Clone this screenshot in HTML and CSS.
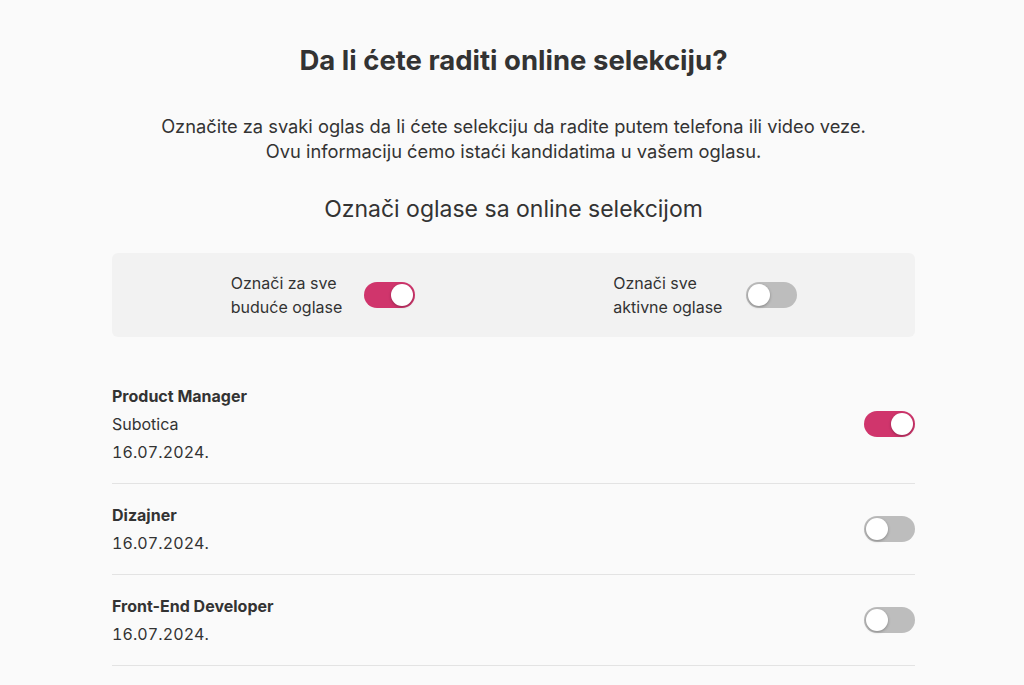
FILE: index.html
```html
<!DOCTYPE html>
<html lang="sr">
<head>
<meta charset="utf-8"/>
<title>Online selekcija</title>
<link rel="stylesheet" href="styles.css">
</head>
<body>
<div class="page">
  <h1 class="title">Da li ćete raditi online selekciju?</h1>
  <p class="intro">Označite za svaki oglas da li ćete selekciju da radite putem telefona ili video veze.<br>Ovu informaciju ćemo istaći kandidatima u vašem oglasu.</p>
  <h2 class="subtitle">Označi oglase sa online selekcijom</h2>

  <div class="bulk">
    <div class="bulk-item">
      <span class="bulk-label">Označi za sve<br>buduće oglase</span>
      <label class="switch"><input type="checkbox" checked><span class="slider"></span></label>
    </div>
    <div class="bulk-item">
      <span class="bulk-label">Označi sve<br>aktivne oglase</span>
      <label class="switch"><input type="checkbox"><span class="slider"></span></label>
    </div>
  </div>

  <ul class="ads">
    <li class="ad">
      <div class="ad-info">
        <div class="ad-title">Product Manager</div>
        <div>Subotica</div>
        <div class="ad-date">16.07.2024.</div>
      </div>
      <label class="switch"><input type="checkbox" checked><span class="slider"></span></label>
    </li>
    <li class="ad">
      <div class="ad-info">
        <div class="ad-title">Dizajner</div>
        <div class="ad-date">16.07.2024.</div>
      </div>
      <label class="switch"><input type="checkbox"><span class="slider"></span></label>
    </li>
    <li class="ad">
      <div class="ad-info">
        <div class="ad-title">Front-End Developer</div>
        <div class="ad-date">16.07.2024.</div>
      </div>
      <label class="switch"><input type="checkbox"><span class="slider"></span></label>
    </li>
  </ul>
</div>
</body>
</html>
```

FILE: styles.css
```css
body {
  margin: 0;
  padding-left: 3px;
  background: #fafafa;
  font-family: 'Inter', 'Noto Sans', sans-serif;
  color: #333;
}
.page {
  width: 803px;
  margin: 0 auto;
  padding-top: 44px;
}
.title {
  margin: 0;
  text-align: center;
  font-size: 27.5px;
  font-weight: 700;
  line-height: 32px;
  color: #333;
}
.intro {
  margin: 38px 0 0;
  text-align: center;
  font-size: 18.3px;
  line-height: 25px;
}
.subtitle {
  margin: 30px 0 0;
  text-align: center;
  font-size: 23px;
  font-weight: 400;
  line-height: 30px;
}
.bulk {
  margin-top: 29px;
  display: grid;
  grid-template-columns: 1fr 1fr;
  height: 84px;
  background: #f2f2f2;
  border-radius: 6px;
}
.bulk-item {
  display: flex;
  align-items: center;
  justify-content: center;
  gap: 18px;
  padding-left: 20px;
}
.bulk-item:last-child {
  padding-left: 0;
  padding-right: 18px;
}
.bulk-label {
  font-size: 16px;
  line-height: 24px;
  width: 115px;
}
.switch {
  position: relative;
  display: inline-block;
  width: 51px;
  height: 26px;
  flex-shrink: 0;
}
.switch input {
  display: none;
}
.slider {
  position: absolute;
  inset: 0;
  background: #bdbdbd;
  border-radius: 13px;
  cursor: pointer;
}
.slider::before {
  content: '';
  position: absolute;
  top: 2px;
  left: 2px;
  width: 22px;
  height: 22px;
  border-radius: 50%;
  background: #fff;
  box-shadow: 0 1px 3px rgba(0, 0, 0, 0.3);
}
.switch input:checked + .slider {
  background: #d0356c;
}
.switch input:checked + .slider::before {
  left: 27px;
}
.ads {
  list-style: none;
  margin: 28px 0 0;
  padding: 0;
}
.ad {
  display: flex;
  align-items: center;
  justify-content: space-between;
  padding: 17px 0;
  border-bottom: 1px solid #e3e3e3;
  font-size: 16px;
  line-height: 28px;
}
.ad-title {
  font-weight: 700;
}
.ad-date {
  font-variant-numeric: tabular-nums;
  letter-spacing: 0.1px;
}
```
